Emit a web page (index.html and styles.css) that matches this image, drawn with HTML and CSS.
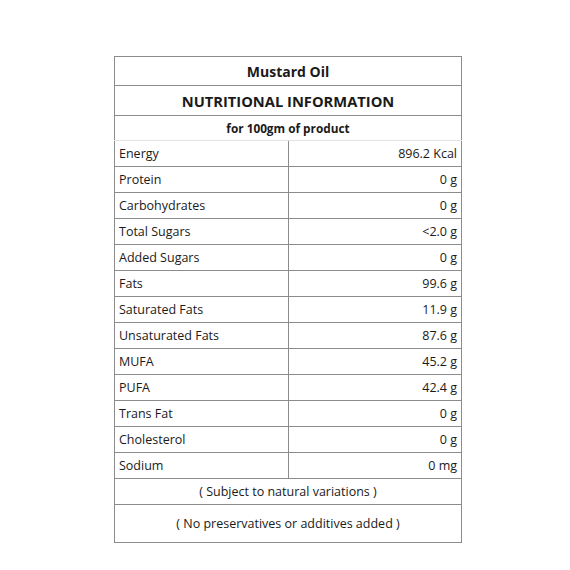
FILE: index.html
```html
<!DOCTYPE html>
<html>
<head>
<meta charset="utf-8">
<link rel="stylesheet" href="styles.css">
</head>
<body>
<div class="page">
<table class="nutri">
<tr class="h1"><td colspan="2">Mustard Oil</td></tr>
<tr class="h2"><td colspan="2">NUTRITIONAL INFORMATION</td></tr>
<tr class="h3"><td colspan="2">for 100gm of product</td></tr>
<tr class="row first"><td class="k">Energy</td><td class="v">896.2 Kcal</td></tr>
<tr class="row"><td class="k">Protein</td><td class="v">0 g</td></tr>
<tr class="row"><td class="k">Carbohydrates</td><td class="v">0 g</td></tr>
<tr class="row"><td class="k">Total Sugars</td><td class="v">&lt;2.0 g</td></tr>
<tr class="row"><td class="k">Added Sugars</td><td class="v">0 g</td></tr>
<tr class="row"><td class="k">Fats</td><td class="v">99.6 g</td></tr>
<tr class="row"><td class="k">Saturated Fats</td><td class="v">11.9 g</td></tr>
<tr class="row"><td class="k">Unsaturated Fats</td><td class="v">87.6 g</td></tr>
<tr class="row"><td class="k">MUFA</td><td class="v">45.2 g</td></tr>
<tr class="row"><td class="k">PUFA</td><td class="v">42.4 g</td></tr>
<tr class="row"><td class="k">Trans Fat</td><td class="v">0 g</td></tr>
<tr class="row"><td class="k">Cholesterol</td><td class="v">0 g</td></tr>
<tr class="row"><td class="k">Sodium</td><td class="v">0 mg</td></tr>
<tr class="note"><td colspan="2">( Subject to natural variations )</td></tr>
<tr class="note last"><td colspan="2">( No preservatives or additives added )</td></tr>
</table>
</div>
</body>
</html>
```
FILE: styles.css
```css
html, body {
  margin: 0;
  padding: 0;
  background: #ffffff;
}
.page {
  padding: 56px 0 0 114px;
}
.nutri {
  border-collapse: collapse;
  width: 348px;
  font-family: "Open Sans", "Liberation Sans", sans-serif;
  color: #1a1a1a;
  table-layout: fixed;
}
.nutri td {
  border: 1px solid #8c8c8c;
  padding: 0;
  text-align: center;
  white-space: nowrap;
}
.h1 td {
  height: 28px;
  font-weight: 700;
  font-size: 14px;
}
.h2 td {
  height: 29px;
  font-weight: 700;
  font-size: 14.7px;
}
.h3 td {
  height: 24px;
  font-weight: 700;
  font-size: 11.8px;
  border-bottom-color: #e2e2e2;
}
.row td {
  height: 25px;
  font-size: 12.5px;
}
.row .k {
  width: 174px;
  text-align: left;
  padding-left: 4px;
}
.row .v {
  text-align: right;
  padding-right: 4px;
}
.note td {
  height: 25px;
  font-size: 12.5px;
}
.note.last td {
  height: 37px;
}
```
